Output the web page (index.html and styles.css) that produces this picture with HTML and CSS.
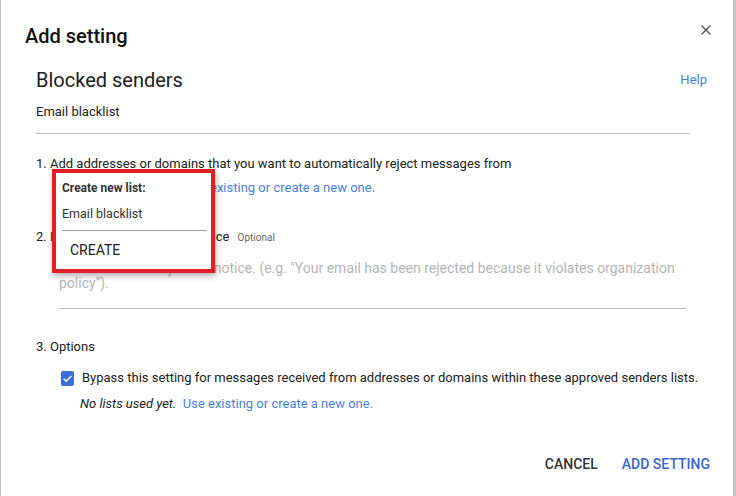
FILE: index.html
```html
<!DOCTYPE html>
<html lang="en">
<head>
    <meta charset="UTF-8">
    <title>Add setting</title>
    <link rel="stylesheet" href="styles.css">
</head>
<body>
    <div class="dialog">
        <h2 class="dialog-title">Add setting</h2>
        <button class="close" aria-label="Close">
            <svg viewBox="5 5 14 14" width="10" height="10"><path d="M19 6.41L17.59 5 12 10.59 6.41 5 5 6.41 10.59 12 5 17.59 6.41 19 12 13.41 17.59 19 19 17.59 13.41 12z" fill="currentColor"/></svg>
        </button>

        <div class="content">
            <div class="header">
                <h3>Blocked senders</h3>
                <a class="link help" href="#">Help</a>
            </div>
            <div class="subtitle">Email blacklist</div>

            <!-- 1. 拒收列表 -->
            <div class="step step-1">
                <div>1. Add addresses or domains that you want to automatically reject messages from</div>
                <div class="sub"><i>No lists used yet.</i>&nbsp; <a class="link" href="#">Use existing or create a new one.</a></div>

                <div class="menu-popup">
                    <div class="menu-label">Create new list:</div>
                    <div class="menu-name">Email blacklist</div>
                    <div class="menu-divider"></div>
                    <div class="menu-action">CREATE</div>
                </div>
            </div>

            <!-- 2. 拒收通知 -->
            <div class="step step-2">
                <div>2. Enter a custom rejection notice <span class="optional">Optional</span></div>
                <div class="notice-input">Enter a custom rejection notice. (e.g. "Your email has been rejected because it violates organization policy").</div>
            </div>

            <!-- 3. 选项 -->
            <div class="step step-3">
                <div>3. Options</div>
                <label class="check-row">
                    <span class="checkbox">
                        <svg viewBox="0 0 24 24" width="13" height="13"><path d="M5 12.5l4.5 4.5L19 7.5" fill="none" stroke="#fff" stroke-width="2.6"/></svg>
                    </span>
                    Bypass this setting for messages received from addresses or domains within these approved senders lists.
                </label>
                <div class="sub sub-3"><i>No lists used yet.</i>&nbsp; <a class="link" href="#">Use existing or create a new one.</a></div>
            </div>
        </div>

        <div class="actions">
            <button class="btn">CANCEL</button>
            <button class="btn primary">ADD SETTING</button>
        </div>
    </div>
</body>
</html>
```

FILE: styles.css
```css
body {
    margin: 0;
    background-color: #c4c4c4;
    font-family: Roboto, "Liberation Sans", sans-serif;
    color: #212121;
}
.dialog {
    position: relative;
    width: 732px;
    height: 496px;
    margin-left: 1px;
    background-color: #ffffff;
    box-sizing: border-box;
    padding-top: 24px;
}
.dialog-title {
    margin: 0 0 0 24px;
    font-size: 20px;
    line-height: 24px;
    font-weight: 500;
    color: #111;
}
.close {
    position: absolute;
    top: 25px;
    right: 22px;
    padding: 0;
    border: none;
    background: none;
    color: #5a5a5a;
    line-height: 0;
    cursor: pointer;
}

.content {
    padding: 0 43px 0 35px;
    font-size: 13px;
    line-height: 16px;
}
.header {
    display: flex;
    justify-content: space-between;
    align-items: center;
    margin: 20px -17px 0 0;
}
.header h3 {
    margin: 0;
    font-size: 20px;
    line-height: 24px;
    font-weight: 400;
}
.link {
    color: #4a7fdc;
    text-decoration: none;
}
.help {
    font-size: 13px;
    margin-top: -1px;
}
.subtitle {
    margin-top: 12px;
    padding-bottom: 13px;
    border-bottom: 1px solid #bdbdbd;
}

.step {
    position: relative;
}
.step-1 {
    margin-top: 22px;
    z-index: 2;
}
.sub {
    margin-top: 8px;
    padding-left: 46px;
}
.sub i {
    color: #212121;
}
.step-2 {
    margin-top: 33px;
}
.optional {
    font-size: 10px;
    color: #666;
    margin-left: 5px;
}
.notice-input {
    margin: 15px 4px 0 23px;
    padding-bottom: 17px;
    border-bottom: 1px solid #bdbdbd;
    color: #b5b5b5;
    font-size: 14px;
    line-height: 15px;
}
.step-3 {
    margin-top: 30px;
}
.check-row {
    display: flex;
    align-items: center;
    margin-top: 15px;
    padding-left: 25px;
    white-space: nowrap;
}
.checkbox {
    display: flex;
    align-items: center;
    justify-content: center;
    width: 15px;
    height: 15px;
    margin-right: 8px;
    border-radius: 2px;
    background-color: #3b6ed8;
}
.sub-3 {
    margin-top: 10px;
    padding-left: 44px;
}

/* 新建列表弹出菜单 */
.menu-popup {
    position: absolute;
    top: 13px;
    left: 16px;
    width: 163px;
    padding: 7px 4px 11px 6px;
    box-sizing: border-box;
    border: 4px solid #e41e26;
    background-color: #ffffff;
    box-shadow: 1px 3px 6px rgba(0, 0, 0, 0.3);
    color: #333;
    font-size: 12px;
    line-height: 16px;
}
.menu-label {
    font-weight: 700;
}
.menu-name {
    margin-top: 10px;
    font-size: 12.5px;
}
.menu-divider {
    margin-top: 8px;
    border-top: 1px solid #9e9e9e;
}
.menu-action {
    margin-top: 11px;
    padding-left: 8px;
    font-size: 14px;
    font-weight: 400;
    color: #222;
}

.actions {
    position: absolute;
    right: 15px;
    bottom: 14px;
    display: flex;
    gap: 8px;
}
.btn {
    padding: 0 8px;
    height: 36px;
    border: none;
    background: none;
    font-family: Roboto, "Liberation Sans", sans-serif;
    font-size: 14px;
    font-weight: 500;
    color: #333;
    cursor: pointer;
}
.btn.primary {
    color: #3b64cf;
}
```
